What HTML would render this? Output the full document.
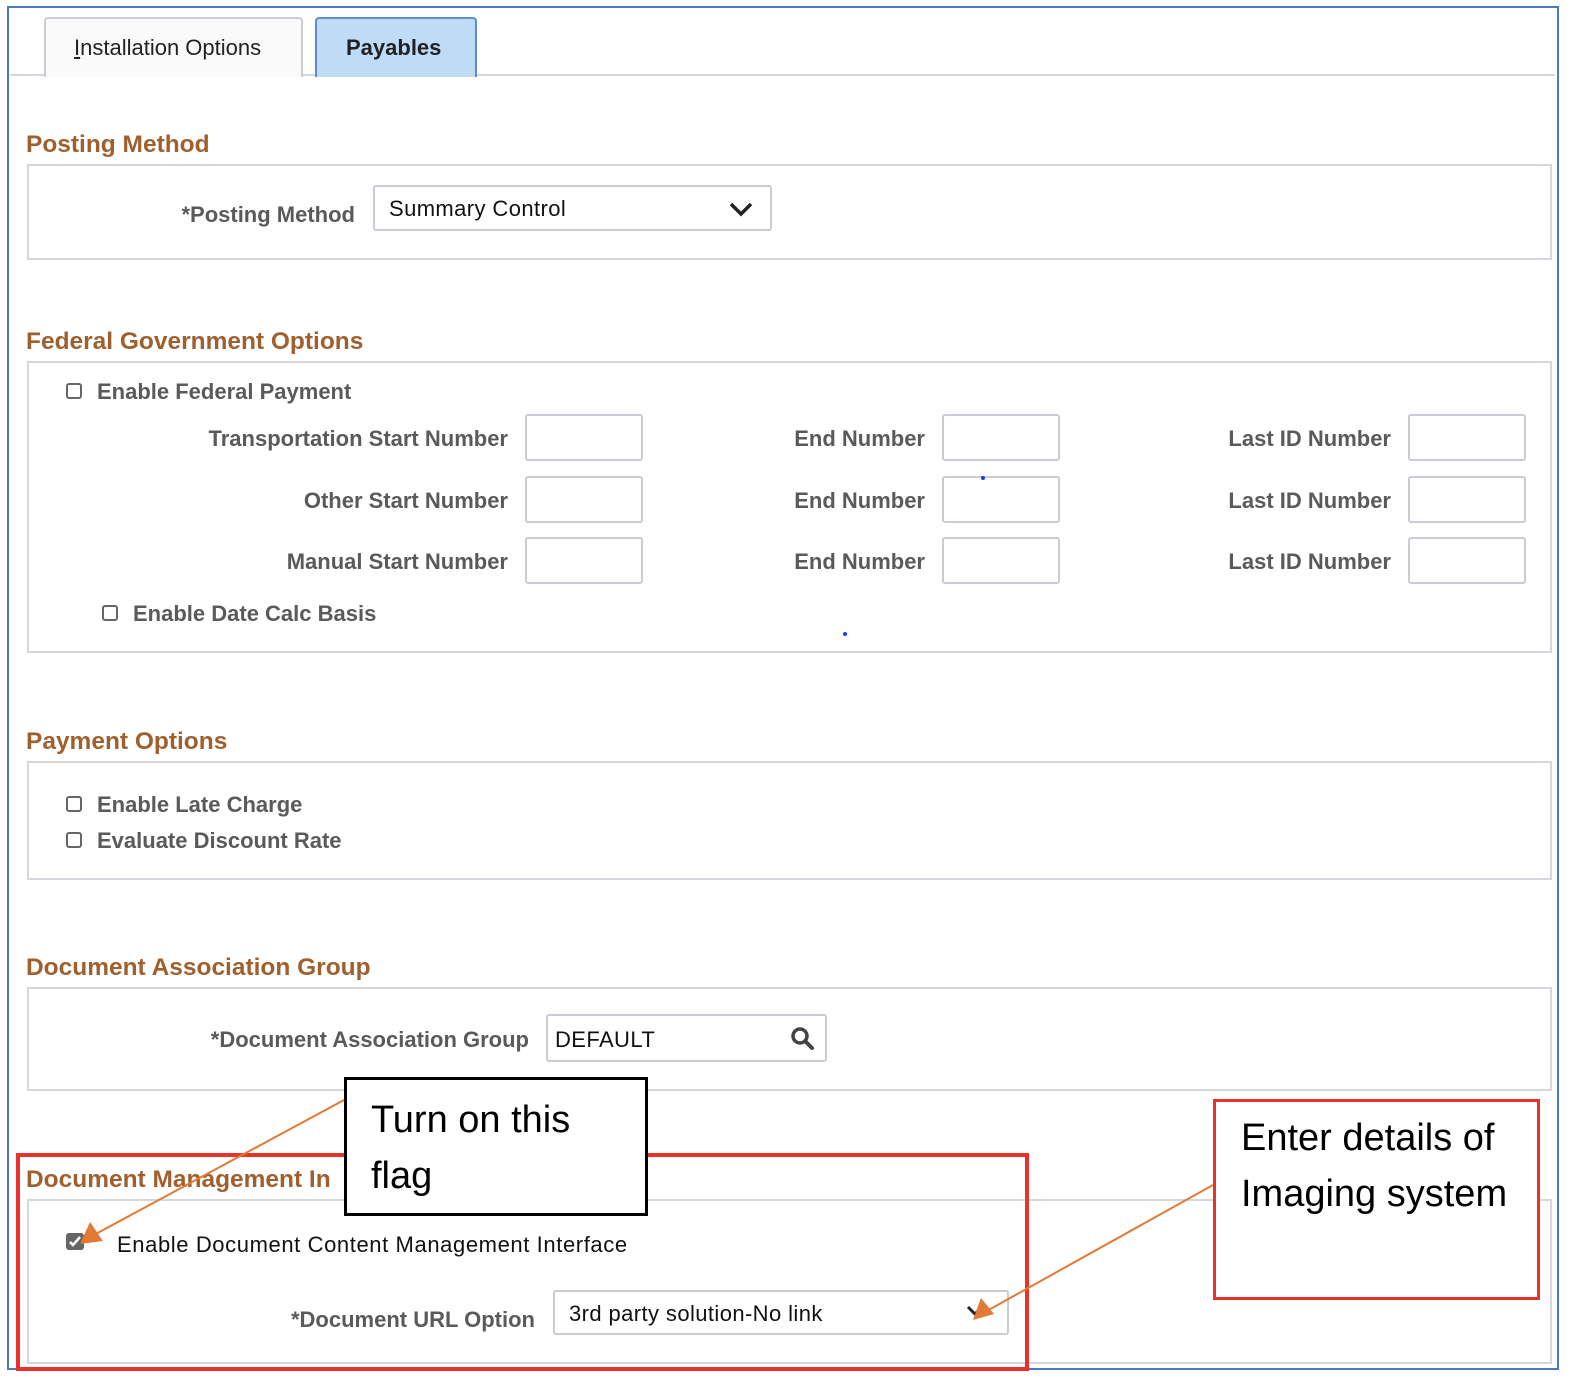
<!DOCTYPE html>
<html><head><meta charset="utf-8"><style>
body{margin:0;width:1588px;height:1392px;background:#fff;position:relative;overflow:hidden;font-family:"Liberation Sans",Arial,sans-serif}
.a{position:absolute}
.t{position:absolute;color:#a0602e;font-size:24px;font-weight:bold;white-space:nowrap;transform:scaleX(1.02);transform-origin:left}
.box{position:absolute;border:2px solid #d4d7dc;background:#fff}
.l{position:absolute;color:#5a5a5a;font-size:22px;font-weight:bold;white-space:nowrap;text-align:right}
.in{position:absolute;border:2px solid #c9ccd2;border-radius:3px;background:#fff;box-sizing:border-box}
.cb{position:absolute;width:16px;height:16px;border:2px solid #666;border-radius:3px;box-sizing:border-box;background:#fff}
.c{position:absolute;color:#5a5a5a;font-size:22px;font-weight:bold;white-space:nowrap}
.v{position:absolute;color:#111;font-size:22px;white-space:nowrap;letter-spacing:0.4px}
.d{position:absolute;width:4px;height:4px;border-radius:2px;background:#1a3cf0}
</style></head><body>
<div class="a" style="left:7px;top:6px;width:1548px;height:1360px;border:2px solid #4a78c6"></div>
<div class="a" style="left:10px;top:74px;width:1545px;height:2px;background:#d4d7dc"></div>
<div class="a" style="left:44px;top:17px;width:255px;height:58px;border:2px solid #c9ccd2;border-bottom:none;border-radius:4px 4px 0 0;background:#fafafa"></div>
<div class="a" style="left:74px;top:35px;font-size:22px;color:#222"><u>I</u>nstallation Options</div>
<div class="a" style="left:315px;top:17px;width:158px;height:58px;border:2px solid #5b8fd0;border-bottom:none;border-radius:4px 4px 0 0;background:#bedcf6"></div>
<div class="a" style="left:346px;top:35px;font-size:22px;color:#222;font-weight:bold">Payables</div>

<div class="t" style="left:26px;top:131px">Posting Method</div>
<div class="box" style="left:27px;top:164px;width:1521px;height:92px"></div>
<div class="l" style="right:1233px;top:202px">*Posting Method</div>
<div class="in" style="left:373px;top:185px;width:399px;height:46px"></div>
<div class="v" style="left:389px;top:196px">Summary Control</div>
<svg class="a" style="left:728px;top:200px" width="26" height="18"><path d="M3 4 L13 14 L23 4" fill="none" stroke="#222" stroke-width="3.5"/></svg>

<div class="t" style="left:26px;top:328px">Federal Government Options</div>
<div class="box" style="left:27px;top:361px;width:1521px;height:288px"></div>
<div class="cb" style="left:66px;top:383px"></div><div class="c" style="left:97px;top:379px">Enable Federal Payment</div>
<div class="l" style="right:1080px;top:426px">Transportation Start Number</div>
<div class="l" style="right:1080px;top:488px">Other Start Number</div>
<div class="l" style="right:1080px;top:549px">Manual Start Number</div>
<div class="l" style="right:663px;top:426px">End Number</div>
<div class="l" style="right:663px;top:488px">End Number</div>
<div class="l" style="right:663px;top:549px">End Number</div>
<div class="l" style="right:197px;top:426px">Last ID Number</div>
<div class="l" style="right:197px;top:488px">Last ID Number</div>
<div class="l" style="right:197px;top:549px">Last ID Number</div>
<div class="in" style="left:525px;top:414px;width:118px;height:47px"></div>
<div class="in" style="left:525px;top:476px;width:118px;height:47px"></div>
<div class="in" style="left:525px;top:537px;width:118px;height:47px"></div>
<div class="in" style="left:942px;top:414px;width:118px;height:47px"></div>
<div class="in" style="left:942px;top:476px;width:118px;height:47px"></div>
<div class="in" style="left:942px;top:537px;width:118px;height:47px"></div>
<div class="in" style="left:1408px;top:414px;width:118px;height:47px"></div>
<div class="in" style="left:1408px;top:476px;width:118px;height:47px"></div>
<div class="in" style="left:1408px;top:537px;width:118px;height:47px"></div>
<div class="cb" style="left:102px;top:605px"></div><div class="c" style="left:133px;top:601px">Enable Date Calc Basis</div>
<div class="d" style="left:981px;top:476px"></div>
<div class="d" style="left:843px;top:632px"></div>
<div class="d" style="left:790px;top:778px"></div>

<div class="t" style="left:26px;top:728px">Payment Options</div>
<div class="box" style="left:27px;top:761px;width:1521px;height:115px"></div>
<div class="cb" style="left:66px;top:796px"></div><div class="c" style="left:97px;top:792px">Enable Late Charge</div>
<div class="cb" style="left:66px;top:832px"></div><div class="c" style="left:97px;top:828px">Evaluate Discount Rate</div>

<div class="t" style="left:26px;top:954px">Document Association Group</div>
<div class="box" style="left:27px;top:987px;width:1521px;height:100px"></div>
<div class="l" style="right:1059px;top:1027px">*Document Association Group</div>
<div class="in" style="left:546px;top:1014px;width:281px;height:48px"></div>
<div class="v" style="left:555px;top:1027px">DEFAULT</div>
<svg class="a" style="left:789px;top:1025px" width="28" height="28"><circle cx="11" cy="11" r="7" fill="none" stroke="#444" stroke-width="3.5"/><path d="M16 16 L23 23" stroke="#444" stroke-width="4" stroke-linecap="round"/></svg>

<div class="t" style="left:26px;top:1166px">Document Management In</div>
<div class="box" style="left:27px;top:1199px;width:1521px;height:161px"></div>
<div class="a" style="left:66px;top:1233px;width:18px;height:17px;background:#666;border-radius:3px"></div>
<svg class="a" style="left:66px;top:1233px" width="18" height="17"><path d="M4 9 L7 12 L14 4" fill="none" stroke="#fff" stroke-width="2.5"/></svg>
<div class="v" style="left:117px;top:1232px;letter-spacing:0.6px">Enable Document Content Management Interface</div>
<div class="l" style="right:1053px;top:1307px">*Document URL Option</div>
<div class="in" style="left:553px;top:1290px;width:456px;height:45px"></div>
<div class="v" style="left:569px;top:1301px">3rd party solution-No link</div>
<svg class="a" style="left:966px;top:1304px" width="18" height="14"><path d="M2 3 L9 10 L16 3" fill="none" stroke="#222" stroke-width="3"/></svg>

<div class="a" style="left:16px;top:1153px;width:1005px;height:210px;border:4px solid #e8332a"></div>
<div class="a" style="left:344px;top:1077px;width:298px;height:133px;border:3px solid #000;background:#fff"></div>
<div class="a" style="left:371px;top:1092px;font-size:38px;line-height:56px;color:#000">Turn on this<br>flag</div>
<div class="a" style="left:1213px;top:1099px;width:321px;height:195px;border:3px solid #e8332a;background:#fff"></div>
<div class="a" style="left:1241px;top:1110px;font-size:38px;line-height:56px;color:#000">Enter details of<br>Imaging system</div>
<svg class="a" style="left:0;top:0" width="1588" height="1392">
<path d="M344 1100 L92 1236" stroke="#e07a35" stroke-width="2"/>
<path d="M80 1244 L90 1222 L103 1241 Z" fill="#e07a35"/>
<path d="M1213 1185 L985 1312" stroke="#e07a35" stroke-width="2"/>
<path d="M973 1320 L981 1298 L994 1314 Z" fill="#e07a35"/>
</svg>
</body></html>
